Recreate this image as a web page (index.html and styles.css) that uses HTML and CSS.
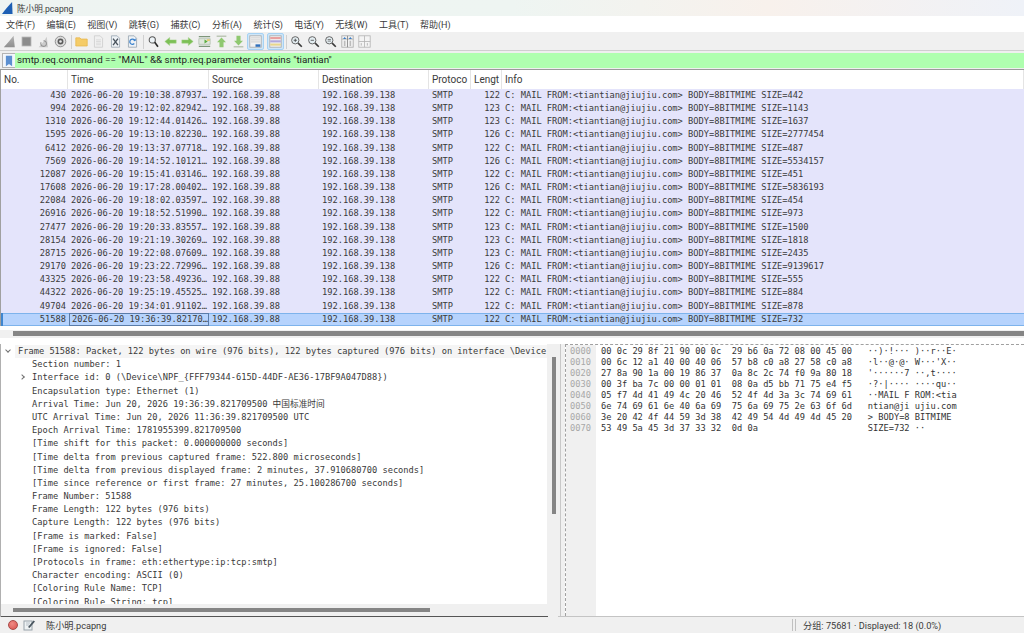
FILE: index.html
```html
<!DOCTYPE html>
<html>
<head>
  <meta charset="UTF-8">
  <title>陈小明.pcapng</title>
  <link rel="stylesheet" href="styles.css">
</head>
<body>
  <svg class="icon-defs" width="0" height="0">
    <defs>
      <linearGradient id="g-fin" x1="0" y1="0" x2="0" y2="1"><stop offset="0" stop-color="#b4b4b4"/><stop offset="1" stop-color="#8e8e8e"/></linearGradient>
      <symbol id="i-fin" viewBox="0 0 16 16"><path d="M1 15 C5 11 9 6 13 1 L14.500 15 Z" fill="url(#g-fin)"/></symbol>
      <symbol id="i-stop" viewBox="0 0 16 16"><rect x="2.500" y="2.500" width="11" height="11" fill="#8c8c8c" stroke="#b4b4b4"/></symbol>
      <symbol id="i-restart" viewBox="0 0 16 16"><path d="M2 15 C6 11 9 7 12 2 L13.500 15 Z" fill="#cccccc"/><path d="M5 9 a3.500 3.500 0 1 0 3 -2" fill="none" stroke="#949494" stroke-width="1.300"/></symbol>
      <symbol id="i-gear" viewBox="0 0 16 16"><circle cx="8" cy="8" r="6.500" fill="#dcdcdc" stroke="#808080"/><circle cx="8" cy="8" r="3.600" fill="#5a5a5a"/><circle cx="8" cy="8" r="1.600" fill="#e8e8e8"/></symbol>
      <symbol id="i-folder" viewBox="0 0 16 16"><path d="M1 3.500 h5 l1.500 1.500 h7.500 v8.500 h-14 Z" fill="#f5cc68" stroke="#e8b850"/></symbol>
      <symbol id="i-file" viewBox="0 0 16 16"><path d="M3 1 h7 l3 3 v11 h-10 Z" fill="#f0f0f0" stroke="#cccccc"/><path d="M5 6 h6 M5 8 h6 M5 10 h6 M5 12 h6" stroke="#d6d6d6"/></symbol>
      <symbol id="i-close" viewBox="0 0 16 16"><path d="M3 1 h7 l3 3 v11 h-10 Z" fill="#eef2f6" stroke="#98a4b0"/><path d="M5 4.500 L11 12.500 M11 4.500 L5 12.500" stroke="#48525c" stroke-width="1.700"/></symbol>
      <symbol id="i-reload" viewBox="0 0 16 16"><path d="M3 1 h7 l3 3 v11 h-10 Z" fill="#eef2f6" stroke="#98a4b0"/><path d="M11 7.500 a3.200 3.200 0 1 0 -.8 3" fill="none" stroke="#3a80cc" stroke-width="1.500"/><path d="M9 7 h3 v-3 Z" fill="#3a80cc"/></symbol>
      <symbol id="i-find" viewBox="0 0 16 16"><circle cx="6.500" cy="6" r="3.800" fill="#eef4f8" stroke="#585858" stroke-width="1.300"/><path d="M9.500 9 L13.500 14.500" stroke="#2a2a2a" stroke-width="2"/></symbol>
      <symbol id="i-left" viewBox="0 0 16 16"><path d="M1 8 L7 3 V6 H15 V10 H7 V13 Z" fill="#7cc056" stroke="#a8d48e" stroke-width=".6"/></symbol>
      <symbol id="i-right" viewBox="0 0 16 16"><path d="M15 8 L9 3 V6 H1 V10 H9 V13 Z" fill="#7cc056" stroke="#a8d48e" stroke-width=".6"/></symbol>
      <symbol id="i-goto" viewBox="0 0 16 16"><path d="M1 2 h14 M1 14 h14" stroke="#7d967a" stroke-width="1.400"/><path d="M1 4.500 h14 v7 h-14 Z" fill="#dfe8dc" stroke="#94a890" stroke-width=".6"/><path d="M2 8 h6 v-2.500 l4 2.500 l-4 2.500 v-2.500 Z" fill="#5cac40"/><path d="M11 5.500 h3.500 v1.500 h-3.500 Z" fill="#e8c040"/></symbol>
      <symbol id="i-top" viewBox="0 0 16 16"><path d="M2 1.500 h12" stroke="#b4c0ac" stroke-width="1.600"/><path d="M8 3 L13.500 9 H10.500 V15 H5.500 V9 H2.500 Z" fill="#8fc870"/></symbol>
      <symbol id="i-bottom" viewBox="0 0 16 16"><path d="M2 14.500 h12" stroke="#b4c0ac" stroke-width="1.600"/><path d="M8 13 L13.500 7 H10.500 V1 H5.500 V7 H2.500 Z" fill="#8fc870"/></symbol>
      <symbol id="i-autoscroll" viewBox="0 0 16 16"><rect x="1" y="1" width="14" height="14" fill="#f2f2f2" stroke="#a8a8a8"/><path d="M2.500 3.500 h11 M2.500 6 h11 M2.500 8.500 h11" stroke="#c8c8c8"/><rect x="8" y="11.500" width="6" height="3" fill="#3070bc"/></symbol>
      <symbol id="i-colorize" viewBox="0 0 16 16"><rect x="1" y="1" width="14" height="14" fill="#f2f2f2" stroke="#a8a8a8"/><rect x="1.500" y="2.500" width="13" height="2.600" fill="#e8a0a0"/><rect x="1.500" y="6.500" width="13" height="2.600" fill="#b0a8dc"/><rect x="1.500" y="10.500" width="13" height="2.600" fill="#e8d68c"/></symbol>
      <symbol id="i-zoomin" viewBox="0 0 16 16"><circle cx="6.500" cy="6.500" r="4.500" fill="#e4eef2" stroke="#646464" stroke-width="1.200"/><path d="M4.500 6.500 h4 M6.500 4.500 v4" stroke="#444"/><path d="M10 10 L14.500 14.500" stroke="#3a3a3a" stroke-width="2"/></symbol>
      <symbol id="i-zoomout" viewBox="0 0 16 16"><circle cx="6.500" cy="6.500" r="4.500" fill="#e4eef2" stroke="#646464" stroke-width="1.200"/><path d="M4.500 6.500 h4" stroke="#444"/><path d="M10 10 L14.500 14.500" stroke="#3a3a3a" stroke-width="2"/></symbol>
      <symbol id="i-zoomreset" viewBox="0 0 16 16"><circle cx="6.500" cy="6.500" r="4.500" fill="#e4eef2" stroke="#646464" stroke-width="1.200"/><path d="M4.500 5.500 h4 M4.500 7.500 h4" stroke="#666"/><path d="M10 10 L14.500 14.500" stroke="#3a3a3a" stroke-width="2"/></symbol>
      <symbol id="i-resize" viewBox="0 0 16 16"><rect x="1" y="1" width="14" height="14" fill="#f2f2f2" stroke="#a8a8a8"/><path d="M1 5 h14" stroke="#a8a8a8"/><path d="M8 1 v14" stroke="#808080"/><path d="M4.500 2.500 l-2 2.500 h4 Z M11.500 2.500 l-2 2.500 h4 Z" fill="#3a7cc4"/><path d="M4.500 7 v6.500 M11.500 7 v6.500" stroke="#bcbcbc" stroke-width="2"/></symbol>
      <symbol id="i-collapse" viewBox="0 0 16 16"><rect x="1" y="1" width="14" height="14" fill="#f4f4f4" stroke="#b4b4b4"/><path d="M1 8 h14 M8 1 v14" stroke="#b4b4b4"/><path d="M4 10 v3 M11.500 10 v3" stroke="#a8a8a8"/></symbol>
    </defs>
  </svg>

  <div class="title-bar">
    <svg class="title-icon" viewBox="0 0 12 13"><path d="M0 13 C3 9 7 4 11 0 L11.500 13 Z" fill="#1d5fb4"/></svg>
    <span>陈小明.pcapng</span>
  </div>

  <div class="menu-bar">
    <span>文件(F)</span><span>编辑(E)</span><span>视图(V)</span><span>跳转(G)</span><span>捕获(C)</span><span>分析(A)</span><span>统计(S)</span><span>电话(Y)</span><span>无线(W)</span><span>工具(T)</span><span>帮助(H)</span>
  </div>

  <div class="tool-bar">
    <button class="tool"><svg><use href="#i-fin"/></svg></button>
    <button class="tool"><svg><use href="#i-stop"/></svg></button>
    <button class="tool"><svg><use href="#i-restart"/></svg></button>
    <button class="tool"><svg><use href="#i-gear"/></svg></button>
    <i class="tool-sep"></i>
    <button class="tool"><svg><use href="#i-folder"/></svg></button>
    <button class="tool"><svg><use href="#i-file"/></svg></button>
    <button class="tool"><svg><use href="#i-close"/></svg></button>
    <button class="tool"><svg><use href="#i-reload"/></svg></button>
    <i class="tool-sep"></i>
    <button class="tool"><svg><use href="#i-find"/></svg></button>
    <button class="tool"><svg><use href="#i-left"/></svg></button>
    <button class="tool"><svg><use href="#i-right"/></svg></button>
    <button class="tool"><svg><use href="#i-goto"/></svg></button>
    <button class="tool"><svg><use href="#i-top"/></svg></button>
    <button class="tool"><svg><use href="#i-bottom"/></svg></button>
    <button class="tool active"><svg><use href="#i-autoscroll"/></svg></button>
    <button class="tool active"><svg><use href="#i-colorize"/></svg></button>
    <i class="tool-sep"></i>
    <button class="tool"><svg><use href="#i-zoomin"/></svg></button>
    <button class="tool"><svg><use href="#i-zoomout"/></svg></button>
    <button class="tool"><svg><use href="#i-zoomreset"/></svg></button>
    <button class="tool"><svg><use href="#i-resize"/></svg></button>
    <button class="tool"><svg><use href="#i-collapse"/></svg></button>
  </div>

  <div class="filter-bar">
    <div class="filter-mark"><svg viewBox="0 0 9 12"><path d="M1 0 h7 v12 l-3.500 -2.500 L1 12 Z" fill="#5c8fd0"/></svg></div>
    <div class="filter-text">smtp.req.command == "MAIL" &amp;&amp; smtp.req.parameter contains "tiantian"</div>
  </div>

  <div class="packet-pane">
    <div class="packet-head">
      <span>No.</span><span>Time</span><span>Source</span><span>Destination</span><span>Protoco</span><span>Lengt</span><span>Info</span>
    </div>
    <div class="packet-row"><span class="num">430</span><span>2026-06-20 19:10:38.87937…</span><span>192.168.39.88</span><span>192.168.39.138</span><span>SMTP</span><span class="num">122</span><span>C: MAIL FROM:&lt;tiantian@jiujiu.com&gt; BODY=8BITMIME SIZE=442</span></div>
    <div class="packet-row"><span class="num">994</span><span>2026-06-20 19:12:02.82942…</span><span>192.168.39.88</span><span>192.168.39.138</span><span>SMTP</span><span class="num">123</span><span>C: MAIL FROM:&lt;tiantian@jiujiu.com&gt; BODY=8BITMIME SIZE=1143</span></div>
    <div class="packet-row"><span class="num">1310</span><span>2026-06-20 19:12:44.01426…</span><span>192.168.39.88</span><span>192.168.39.138</span><span>SMTP</span><span class="num">123</span><span>C: MAIL FROM:&lt;tiantian@jiujiu.com&gt; BODY=8BITMIME SIZE=1637</span></div>
    <div class="packet-row"><span class="num">1595</span><span>2026-06-20 19:13:10.82230…</span><span>192.168.39.88</span><span>192.168.39.138</span><span>SMTP</span><span class="num">126</span><span>C: MAIL FROM:&lt;tiantian@jiujiu.com&gt; BODY=8BITMIME SIZE=2777454</span></div>
    <div class="packet-row"><span class="num">6412</span><span>2026-06-20 19:13:37.07718…</span><span>192.168.39.88</span><span>192.168.39.138</span><span>SMTP</span><span class="num">122</span><span>C: MAIL FROM:&lt;tiantian@jiujiu.com&gt; BODY=8BITMIME SIZE=487</span></div>
    <div class="packet-row"><span class="num">7569</span><span>2026-06-20 19:14:52.10121…</span><span>192.168.39.88</span><span>192.168.39.138</span><span>SMTP</span><span class="num">126</span><span>C: MAIL FROM:&lt;tiantian@jiujiu.com&gt; BODY=8BITMIME SIZE=5534157</span></div>
    <div class="packet-row"><span class="num">12087</span><span>2026-06-20 19:15:41.03146…</span><span>192.168.39.88</span><span>192.168.39.138</span><span>SMTP</span><span class="num">122</span><span>C: MAIL FROM:&lt;tiantian@jiujiu.com&gt; BODY=8BITMIME SIZE=451</span></div>
    <div class="packet-row"><span class="num">17608</span><span>2026-06-20 19:17:28.00402…</span><span>192.168.39.88</span><span>192.168.39.138</span><span>SMTP</span><span class="num">126</span><span>C: MAIL FROM:&lt;tiantian@jiujiu.com&gt; BODY=8BITMIME SIZE=5836193</span></div>
    <div class="packet-row"><span class="num">22084</span><span>2026-06-20 19:18:02.03597…</span><span>192.168.39.88</span><span>192.168.39.138</span><span>SMTP</span><span class="num">122</span><span>C: MAIL FROM:&lt;tiantian@jiujiu.com&gt; BODY=8BITMIME SIZE=454</span></div>
    <div class="packet-row"><span class="num">26916</span><span>2026-06-20 19:18:52.51990…</span><span>192.168.39.88</span><span>192.168.39.138</span><span>SMTP</span><span class="num">122</span><span>C: MAIL FROM:&lt;tiantian@jiujiu.com&gt; BODY=8BITMIME SIZE=973</span></div>
    <div class="packet-row"><span class="num">27477</span><span>2026-06-20 19:20:33.83557…</span><span>192.168.39.88</span><span>192.168.39.138</span><span>SMTP</span><span class="num">123</span><span>C: MAIL FROM:&lt;tiantian@jiujiu.com&gt; BODY=8BITMIME SIZE=1500</span></div>
    <div class="packet-row"><span class="num">28154</span><span>2026-06-20 19:21:19.30269…</span><span>192.168.39.88</span><span>192.168.39.138</span><span>SMTP</span><span class="num">123</span><span>C: MAIL FROM:&lt;tiantian@jiujiu.com&gt; BODY=8BITMIME SIZE=1818</span></div>
    <div class="packet-row"><span class="num">28715</span><span>2026-06-20 19:22:08.07609…</span><span>192.168.39.88</span><span>192.168.39.138</span><span>SMTP</span><span class="num">123</span><span>C: MAIL FROM:&lt;tiantian@jiujiu.com&gt; BODY=8BITMIME SIZE=2435</span></div>
    <div class="packet-row"><span class="num">29170</span><span>2026-06-20 19:23:22.72996…</span><span>192.168.39.88</span><span>192.168.39.138</span><span>SMTP</span><span class="num">126</span><span>C: MAIL FROM:&lt;tiantian@jiujiu.com&gt; BODY=8BITMIME SIZE=9139617</span></div>
    <div class="packet-row"><span class="num">43325</span><span>2026-06-20 19:23:58.49236…</span><span>192.168.39.88</span><span>192.168.39.138</span><span>SMTP</span><span class="num">122</span><span>C: MAIL FROM:&lt;tiantian@jiujiu.com&gt; BODY=8BITMIME SIZE=555</span></div>
    <div class="packet-row"><span class="num">44322</span><span>2026-06-20 19:25:19.45525…</span><span>192.168.39.88</span><span>192.168.39.138</span><span>SMTP</span><span class="num">122</span><span>C: MAIL FROM:&lt;tiantian@jiujiu.com&gt; BODY=8BITMIME SIZE=884</span></div>
    <div class="packet-row"><span class="num">49704</span><span>2026-06-20 19:34:01.91102…</span><span>192.168.39.88</span><span>192.168.39.138</span><span>SMTP</span><span class="num">122</span><span>C: MAIL FROM:&lt;tiantian@jiujiu.com&gt; BODY=8BITMIME SIZE=878</span></div>
    <div class="packet-row selected"><span class="num">51588</span><span class="focus-cell">2026-06-20 19:36:39.82170…</span><span>192.168.39.88</span><span>192.168.39.138</span><span>SMTP</span><span class="num">122</span><span>C: MAIL FROM:&lt;tiantian@jiujiu.com&gt; BODY=8BITMIME SIZE=732</span></div>
  </div>
  <div class="h-scroll packet-scroll"><i></i></div>

  <div class="lower-panes">
    <div class="detail-pane">
      <div class="detail-main">
        <div class="detail-lines">
          <div class="detail-line top-line"><b class="arrow-down"></b>Frame 51588: Packet, 122 bytes on wire (976 bits), 122 bytes captured (976 bits) on interface \Device</div>
          <div class="detail-line">Section number: 1</div>
          <div class="detail-line"><b class="arrow-right"></b>Interface id: 0 (\Device\NPF_{FFF79344-615D-44DF-AE36-17BF9A047D88})</div>
          <div class="detail-line">Encapsulation type: Ethernet (1)</div>
          <div class="detail-line">Arrival Time: Jun 20, 2026 19:36:39.821709500 中国标准时间</div>
          <div class="detail-line">UTC Arrival Time: Jun 20, 2026 11:36:39.821709500 UTC</div>
          <div class="detail-line">Epoch Arrival Time: 1781955399.821709500</div>
          <div class="detail-line">[Time shift for this packet: 0.000000000 seconds]</div>
          <div class="detail-line">[Time delta from previous captured frame: 522.800 microseconds]</div>
          <div class="detail-line">[Time delta from previous displayed frame: 2 minutes, 37.910680700 seconds]</div>
          <div class="detail-line">[Time since reference or first frame: 27 minutes, 25.100286700 seconds]</div>
          <div class="detail-line">Frame Number: 51588</div>
          <div class="detail-line">Frame Length: 122 bytes (976 bits)</div>
          <div class="detail-line">Capture Length: 122 bytes (976 bits)</div>
          <div class="detail-line">[Frame is marked: False]</div>
          <div class="detail-line">[Frame is ignored: False]</div>
          <div class="detail-line">[Protocols in frame: eth:ethertype:ip:tcp:smtp]</div>
          <div class="detail-line">Character encoding: ASCII (0)</div>
          <div class="detail-line">[Coloring Rule Name: TCP]</div>
          <div class="detail-line">[Coloring Rule String: tcp]</div>
        </div>
        <div class="v-scroll"><i></i></div>
      </div>
      <div class="h-scroll detail-scroll"><i></i></div>
    </div>
    <div class="pane-split"></div>
    <div class="hex-pane">
      <pre class="hex-offsets">0000
0010
0020
0030
0040
0050
0060
0070</pre>
      <pre class="hex-bytes">00 0c 29 8f 21 90 00 0c  29 b6 0a 72 08 00 45 00   ··)·!··· )··r··E·
00 6c 12 a1 40 00 40 06  57 b8 c0 a8 27 58 c0 a8   ·l··@·@· W···'X··
27 8a 90 1a 00 19 86 37  0a 8c 2c 74 f0 9a 80 18   '······7 ··,t····
00 3f ba 7c 00 00 01 01  08 0a d5 bb 71 75 e4 f5   ·?·|···· ····qu··
05 f7 4d 41 49 4c 20 46  52 4f 4d 3a 3c 74 69 61   ··MAIL F ROM:&lt;tia
6e 74 69 61 6e 40 6a 69  75 6a 69 75 2e 63 6f 6d   ntian@ji ujiu.com
3e 20 42 4f 44 59 3d 38  42 49 54 4d 49 4d 45 20   &gt; BODY=8 BITMIME
53 49 5a 45 3d 37 33 32  0d 0a                     SIZE=732 ··</pre>
    </div>
  </div>

  <div class="status-bar">
    <i class="status-dot"></i>
    <svg class="status-edit" viewBox="0 0 12 12"><rect x="1" y="2" width="8" height="9" fill="#eef2f4" stroke="#98a2aa"/><path d="M3 4 h4 M3 6 h3" stroke="#b8c0c8"/><path d="M5 8 L10.500 1.500 L12 2.500 L6.500 9 Z" fill="#4a5660"/></svg>
    <span class="status-file">陈小明.pcapng</span>
    <i class="status-sep"></i>
    <span class="status-count">分组: 75681 · Displayed: 18 (0.0%)</span>
  </div>
</body>
</html>
```

FILE: styles.css
```css
* {
  box-sizing: border-box;
}

html, body {
  margin: 0;
  height: 633px;
  overflow: hidden;
}

body {
  display: flex;
  flex-direction: column;
  background: #fff;
  color: #3a3a3a;
  font-family: Roboto, "Noto Sans CJK SC", sans-serif;
  font-size: 9.6px;
}

.icon-defs {
  position: absolute;
}

.title-bar {
  height: 16px;
  flex: none;
  display: flex;
  align-items: center;
  gap: 4px;
  padding-left: 2px;
  background: linear-gradient(90deg, #eef4f2 0%, #eef5f2 50%, #f8f1ec 75%, #eff2f8 100%);
  font-size: 8.6px;
}

.title-icon {
  width: 11px;
  height: 12px;
}

.menu-bar {
  height: 16px;
  flex: none;
  display: flex;
  align-items: center;
  gap: 11.4px;
  padding-left: 6px;
  background: #fff;
  font-size: 9px;
}

.menu-bar span {
  white-space: nowrap;
}

.tool-bar {
  height: 19px;
  flex: none;
  display: flex;
  align-items: center;
  padding: 1px 0 0 1px;
  background: #f0f0f0;
  border-bottom: 1px solid #cfcfcf;
}

.tool {
  width: 17px;
  height: 17px;
  flex: none;
  padding: 0;
  border: 1px solid transparent;
  border-radius: 2px;
  background: none;
  display: flex;
  align-items: center;
  justify-content: center;
}

.tool svg {
  width: 13px;
  height: 13px;
}

.tool.active {
  background: #cfe6f8;
  border-color: #a6d2f4;
}

.tool.active + .tool.active {
  margin-left: 3px;
}

.tool-sep {
  width: 4px;
  height: 14px;
  flex: none;
  background: linear-gradient(#d0d0d0, #d0d0d0) center / 1px 100% no-repeat;
}

.filter-bar {
  height: 19px;
  flex: none;
  display: flex;
  padding: 2px 0 1px 2px;
  background: #efefef;
  border-bottom: 1px solid #9a9a9a;
}

.filter-mark {
  width: 13px;
  flex: none;
  display: flex;
  align-items: center;
  justify-content: center;
  background: #f2f6fb;
  border: 1px solid #b4b4b4;
  border-right: none;
}

.filter-mark svg {
  width: 8px;
  height: 12px;
}

.filter-text {
  flex: 1;
  padding-left: 2px;
  line-height: 14px;
  background: #afffaf;
  color: #222;
  font-size: 9.8px;
  white-space: nowrap;
}

.packet-pane {
  height: 256px;
  flex: none;
  border-left: 1px solid #a0a0a0;
  background: #fff;
}

.packet-head,
.packet-row {
  display: grid;
  grid-template-columns: 67px 141px 110px 110px 42px 31px 1fr;
  white-space: nowrap;
}

.packet-head {
  height: 19px;
  line-height: 19px;
  font-size: 10px;
}

.packet-head span {
  padding-left: 3px;
  border-right: 1px solid #e4e4e4;
  overflow: hidden;
}

.packet-row {
  height: 13.17px;
  line-height: 12px;
  background: #e4e4fb;
  font-family: "DejaVu Sans Mono", monospace;
  font-size: 8.7px;
}

.packet-row span {
  padding-left: 3px;
  overflow: hidden;
}

.packet-row .num {
  padding: 0 2px 0 0;
  text-align: right;
}

.packet-row.selected {
  position: relative;
  background: #b6d3fd;
  box-shadow: inset 0 1px #7db3ec, inset 0 -1px #7db3ec;
  line-height: 13px;
}

.packet-row.selected::before {
  content: "";
  position: absolute;
  left: 0;
  top: 0;
  bottom: 0;
  width: 2px;
  background: #3f86d0;
}

.packet-row .focus-cell {
  margin-left: 1px;
  padding-left: 2px;
  border: 1px solid #5a7ca8;
  line-height: 11px;
}

.h-scroll {
  flex: none;
  background: #f0f0f0;
}

.h-scroll i {
  display: block;
  height: 100%;
  background: #858585;
}

.packet-scroll {
  height: 8px;
  margin-top: 4px;
  padding: 1px 0 2px 13px;
}

.lower-panes {
  flex: 1;
  min-height: 0;
  margin-top: 6px;
  display: flex;
  border-bottom: 1px solid #c4c4c4;
}

.detail-pane {
  width: 558px;
  flex: none;
  display: flex;
  flex-direction: column;
  border-left: 1px solid #b0b0b0;
  margin-bottom: -1px;
}

.detail-main {
  flex: 1;
  min-height: 0;
  display: flex;
}

.detail-lines {
  flex: 1;
  min-width: 0;
  overflow: hidden;
  padding-top: 1px;
  font-family: "DejaVu Sans Mono", "Noto Sans CJK SC", monospace;
  font-size: 8.7px;
}

.detail-line {
  height: 13.2px;
  line-height: 13px;
  padding-left: 31px;
  white-space: nowrap;
  overflow: hidden;
  position: relative;
}

.top-line {
  padding-left: 17px;
  background: linear-gradient(#f5f5f5, #f5f5f5) 14px 0 no-repeat;
}

.arrow-down,
.arrow-right {
  position: absolute;
  width: 4px;
  height: 4px;
  border-right: 1px solid #707070;
  border-bottom: 1px solid #707070;
}

.arrow-down {
  left: 5px;
  top: 3px;
  transform: rotate(45deg);
}

.arrow-right {
  left: 19px;
  top: 4px;
  transform: rotate(-45deg);
}

.v-scroll {
  width: 11px;
  flex: none;
  padding: 13px 2px 90px 5px;
  background: #f0f0f0;
}

.v-scroll i {
  display: block;
  height: 100%;
  background: #858585;
}

.detail-scroll {
  height: 13px;
  padding: 4px 128px 5px 12px;
  background: linear-gradient(#555, #555) 0 100% / 547px 1px no-repeat #f0f0f0;
}

.pane-split {
  width: 7px;
  flex: none;
  background: linear-gradient(#c8c8c8, #c8c8c8) 2px 0 / 1px 100% no-repeat #f0f0f0;
}

.hex-pane {
  flex: 1;
  min-width: 0;
  display: flex;
  border-top: 1px dashed #a0a0a0;
  border-left: 1px dashed #a0a0a0;
  font-family: "DejaVu Sans Mono", monospace;
  font-size: 8.7px;
  line-height: 10.95px;
}

.hex-pane pre {
  margin: 0;
  padding-top: 1px;
  font: inherit;
}

.hex-offsets {
  width: 30px;
  flex: none;
  padding-left: 4px;
  background: #f0f0f0;
  color: #a8a8a8;
}

.hex-bytes {
  padding-left: 5px;
  color: #333;
}

.status-bar {
  height: 16px;
  flex: none;
  display: flex;
  align-items: center;
  padding-left: 8px;
  background: #f0f0f0;
  font-size: 9.2px;
}

.status-dot {
  width: 10px;
  height: 10px;
  border-radius: 50%;
  background: radial-gradient(circle at 40% 35%, #f08a84, #d8504c);
  border: 1px solid #a84a48;
}

.status-edit {
  width: 12px;
  height: 12px;
  margin-left: 5px;
}

.status-file {
  margin-left: 11px;
}

.status-sep {
  width: 4px;
  height: 12px;
  margin-left: auto;
  border-left: 1px solid #c0c0c0;
  border-right: 1px solid #c0c0c0;
}

.status-count {
  width: 228px;
  padding-left: 7px;
  white-space: nowrap;
}
```
